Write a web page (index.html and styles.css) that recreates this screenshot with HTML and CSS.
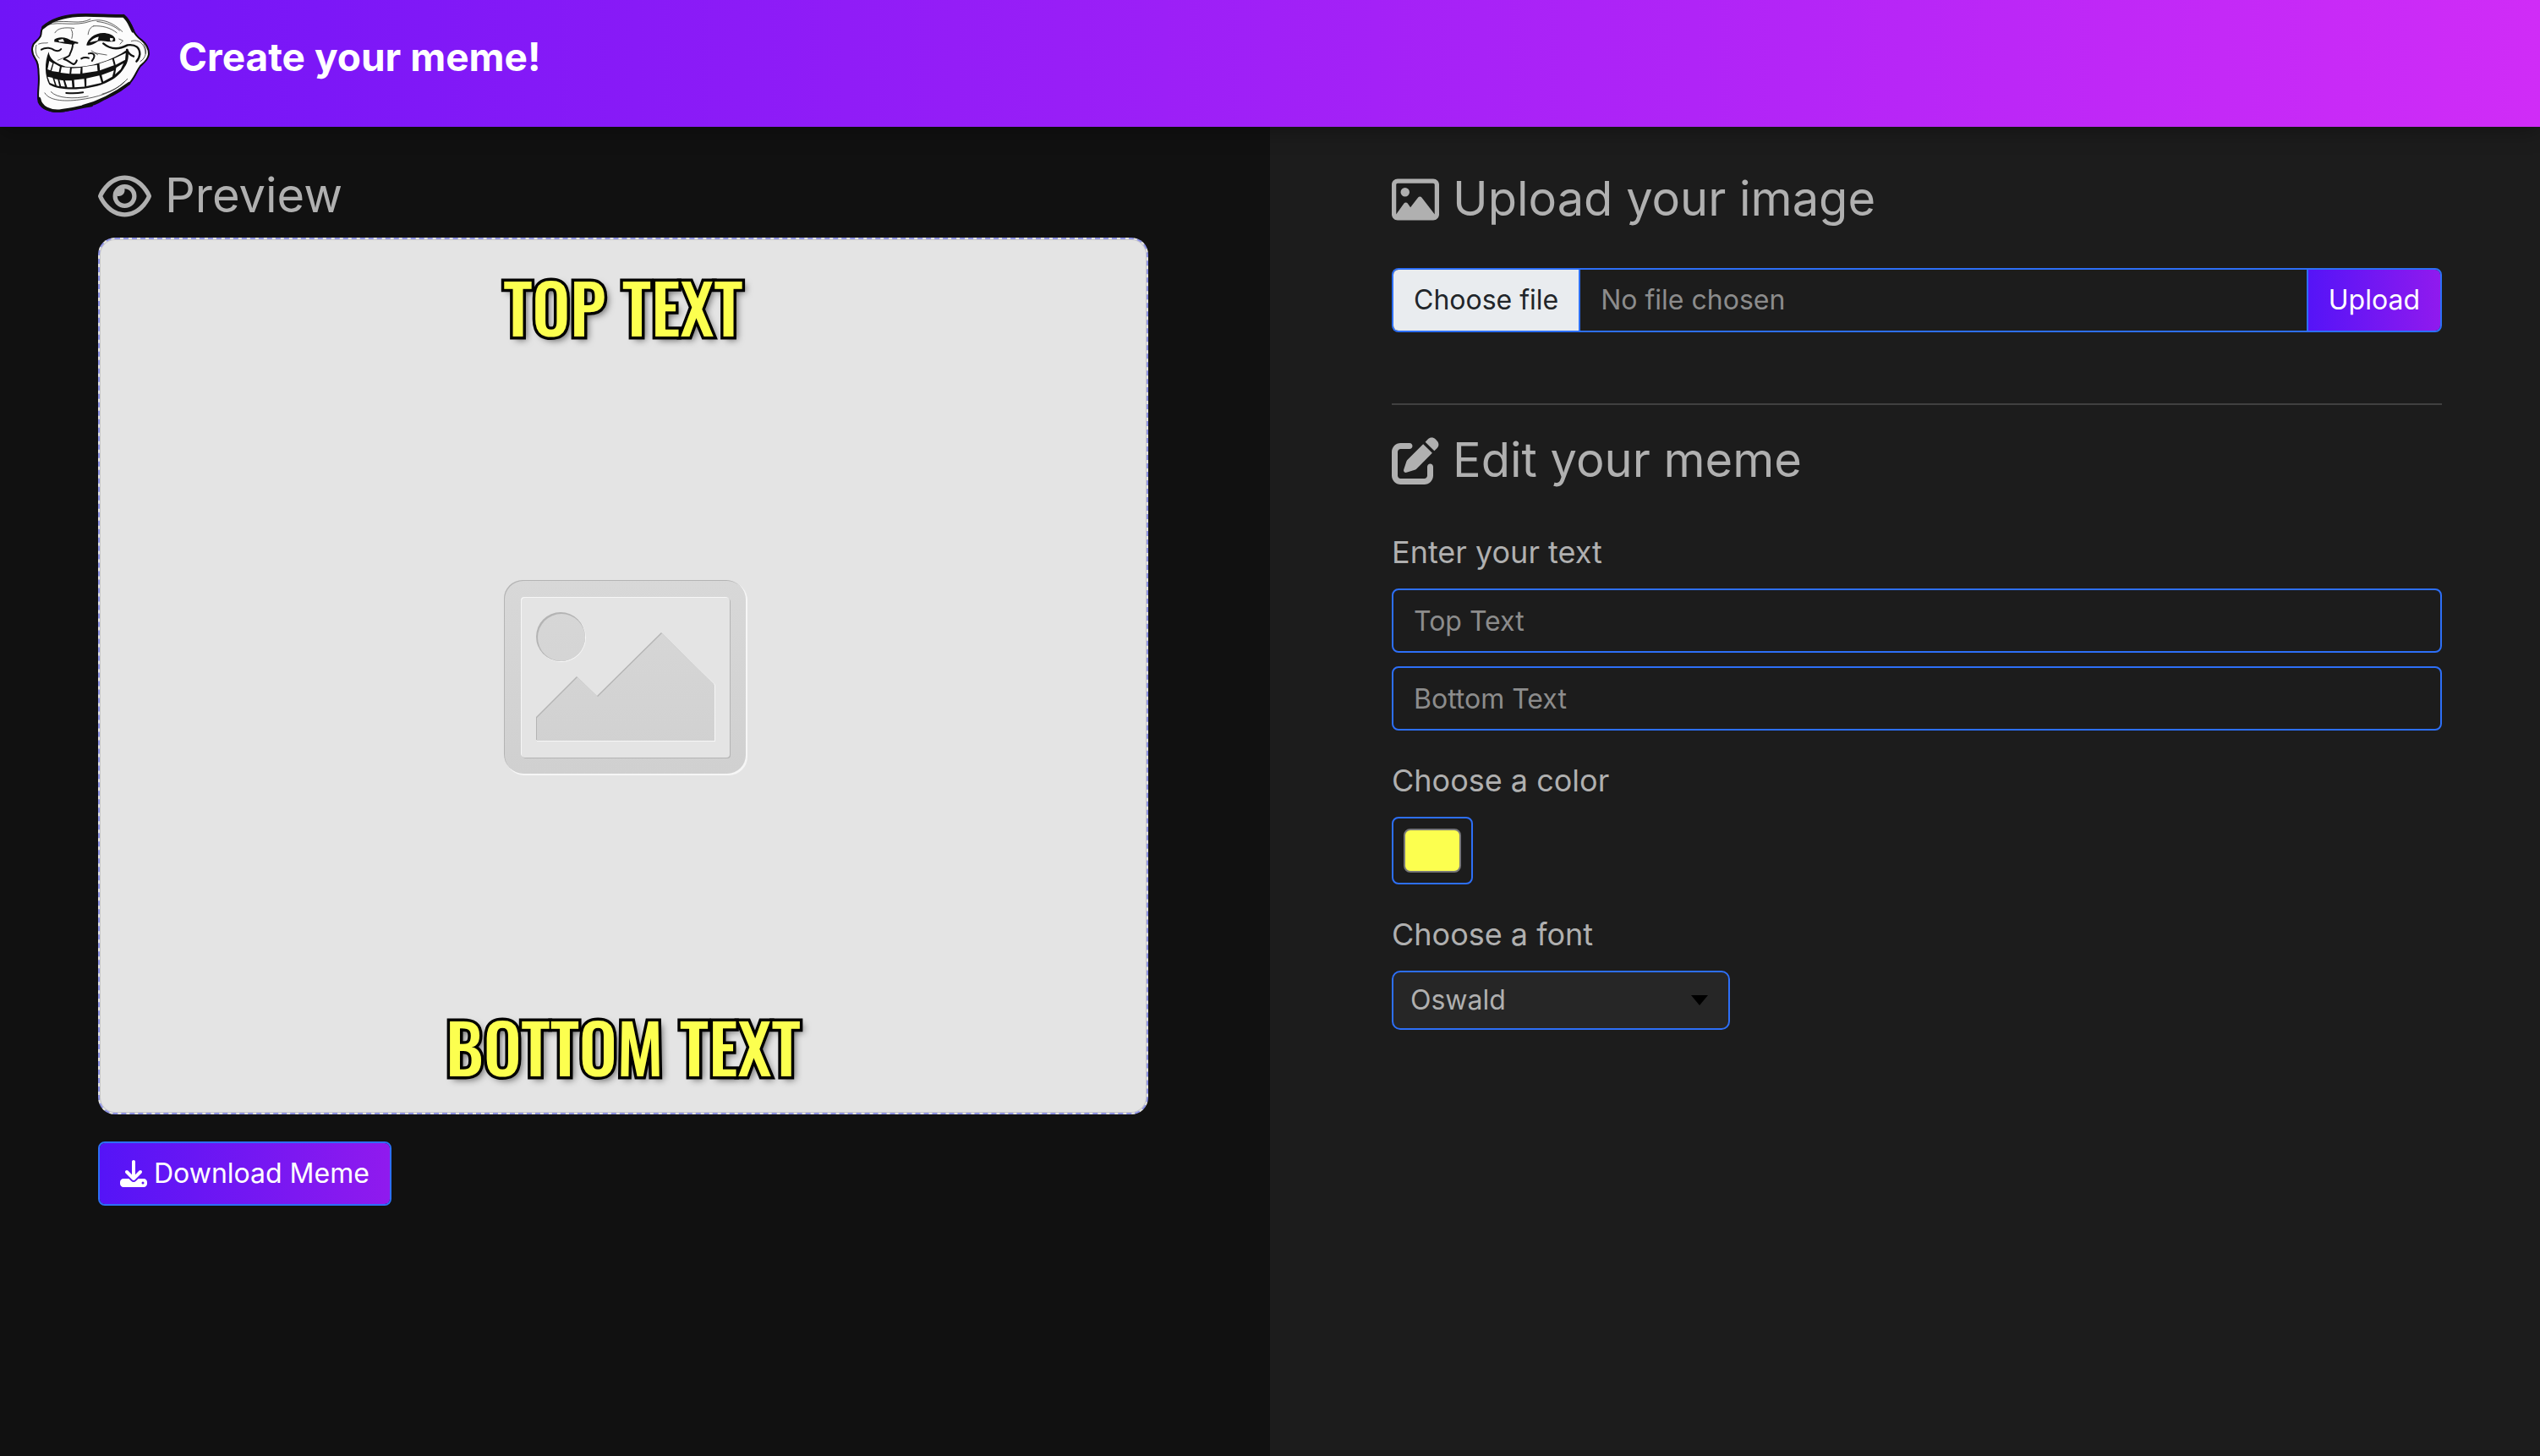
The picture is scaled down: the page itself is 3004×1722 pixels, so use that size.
FILE: index.html
```html
<!DOCTYPE html>
<html lang="en">
<head>
<meta charset="utf-8">
<meta name="viewport" content="width=device-width, initial-scale=1">
<title>Create your meme!</title>
<link rel="stylesheet" href="styles.css">
</head>
<body>
<header class="header">
  <svg class="logo" viewBox="45 45 430 360" role="img" aria-label="Troll face">
    <path class="face" d="M88 100 C112 74 150 58 200 54 C250 49 310 56 374 55 C392 66 402 84 411 106 C416 122 424 130 440 142 C458 156 466 174 466 192 C464 212 448 224 436 234 C424 250 418 270 402 290 C380 316 340 338 306 352 C290 362 274 374 250 374 C220 382 180 394 150 396 C118 400 84 386 74 362 C68 330 78 300 74 262 C74 240 72 222 62 208 C50 190 48 172 56 156 C66 144 78 138 82 124 C84 114 82 106 88 100 Z"/>
    <path class="ink heavy" d="M90 97 C120 70 160 57 214 54 C270 51 330 58 376 56 M376 56 C396 72 400 92 410 110 M76 350 C82 384 116 396 148 394 C190 390 230 378 262 374 M232 378 C290 362 350 330 396 296"/>
    <path class="ink fine" d="M106 88 C150 74 200 96 262 74 C310 62 350 90 372 112 M128 78 C180 70 220 88 258 68 M282 76 C320 80 346 94 362 108 M132 116 C142 98 168 96 200 100 M190 104 C196 114 196 122 192 136 M250 122 C252 106 258 96 270 92 M270 92 C300 90 330 98 352 116 M360 138 L374 144 L364 156 M404 146 C430 136 454 158 454 190 M448 156 C462 180 456 206 436 218 M66 160 C60 180 66 200 76 206 M74 156 C90 150 100 154 106 152 M142 214 L166 204 M274 188 L316 195 M262 180 L284 194 M96 330 C110 356 160 362 220 354 C280 346 340 330 380 290 M118 326 C140 350 200 352 250 342 M300 334 C340 322 366 306 390 280"/>
    <path class="ink" d="M172 330 C190 332 210 332 232 328 M84 176 C100 166 120 170 130 178 C140 182 150 180 154 174 M190 146 C202 150 206 152 212 152 M194 150 C200 172 186 184 184 196 C176 204 166 204 164 210 C178 212 184 222 198 228 C206 226 208 220 210 214 M226 208 C236 202 248 204 252 206 M252 190 C268 186 276 194 270 206 L264 216"/>
    <path class="ink mid" d="M304 154 C330 176 360 176 390 160 C420 156 434 170 434 192 C432 206 428 212 422 218 M388 176 C394 190 400 196 412 200"/>
    <path class="solid" d="M130 140 C144 128 176 130 196 148 C204 152 206 156 198 158 C170 156 150 150 130 148 Z M244 160 C250 134 280 112 316 118 C340 122 350 134 346 146 C320 152 300 140 286 146 C270 156 258 164 244 160 Z"/>
    <path class="tooth" d="M144 142 L160 138 L166 148 L148 148 Z M256 150 C262 140 276 132 288 130 L284 144 Z M328 134 L340 136 L336 146 L328 144 Z"/>
    <path class="solid" d="M110 184 C112 206 130 224 170 236 C230 244 320 226 392 174 C396 200 392 222 380 238 C360 276 310 304 250 312 C200 320 140 318 112 300 C96 270 94 222 110 184 Z"/>
    <path class="tooth" d="M112 216 L124 224 L116 250 L106 246 Z M128 224 L150 236 L146 256 L120 252 Z M156 238 L186 240 L184 262 L152 258 Z M192 242 L224 240 L222 262 L190 262 Z M230 238 L282 230 L284 252 L230 260 Z M290 226 L336 210 L342 232 L292 250 Z M342 208 L384 188 L382 212 L348 230 Z M106 272 L124 276 L132 302 L114 294 Z M130 280 L142 282 L148 306 L138 304 Z M148 284 L162 286 L168 308 L154 306 Z M168 286 L192 286 L194 310 L176 310 Z M200 284 L236 280 L238 308 L202 310 Z M244 278 L290 268 L298 294 L244 306 Z M298 266 L342 250 L336 272 L304 290 Z M350 240 L376 224 L366 246 L346 264 Z"/>
    <path class="ink fine" d="M88 100 C82 110 84 120 82 128 C76 140 62 146 56 158 C48 176 52 196 64 210 C74 222 74 240 74 262 C78 300 68 330 74 356 M410 108 C416 128 436 138 446 146 C468 164 470 196 458 212 C444 228 432 236 426 250 C418 274 404 290 392 300"/>
  </svg>
  <h1 class="title">Create your meme!</h1>
</header>
<main class="columns">
  <section class="pane preview">
    <h2 class="heading">
      <svg class="icon wide" viewBox="0 0 576 512" aria-hidden="true"><path d="M288 80c-65.2 0-118.8 29.6-159.9 67.7C89.6 183.5 63 226 49.4 256c13.6 30 40.2 72.5 78.6 108.3C169.2 402.4 222.8 432 288 432s118.8-29.6 159.9-67.7C486.4 328.5 513 286 526.6 256c-13.6-30-40.2-72.5-78.6-108.3C406.8 109.6 353.2 80 288 80zM95.4 112.6C142.5 68.8 207.2 32 288 32s145.5 36.8 192.6 80.6c46.8 43.5 78.1 95.4 93 131.1c3.3 7.9 3.3 16.7 0 24.6c-14.9 35.7-46.2 87.7-93 131.1C433.5 443.2 368.8 480 288 480s-145.5-36.8-192.6-80.6C48.6 356 17.3 304 2.5 268.3c-3.3-7.9-3.3-16.7 0-24.6C17.3 208 48.6 156 95.4 112.6zM288 336c44.2 0 80-35.8 80-80s-35.8-80-80-80c-.7 0-1.3 0-2 0c1.3 5.1 2 10.5 2 16c0 35.3-28.7 64-64 64c-5.5 0-10.9-.7-16-2c0 .7 0 1.3 0 2c0 44.2 35.8 80 80 80zm0-208a128 128 0 1 1 0 256 128 128 0 1 1 0-256z"/></svg>
      Preview
    </h2>
    <div class="meme">
      <svg class="placeholder" viewBox="2 3 1238 1033" aria-hidden="true">
        <defs>
          <linearGradient id="shade" gradientUnits="userSpaceOnUse" x1="0" y1="407" x2="0" y2="635">
            <stop offset="0" stop-color="#d8d8d8"/><stop offset="1" stop-color="#d0d0d0"/>
          </linearGradient>
        </defs>
        <rect class="light" x="482" y="408" width="286" height="229" rx="22"/>
        <rect class="dark" x="480" y="406" width="285" height="228" rx="22"/>
        <rect x="481" y="407" width="285" height="228" rx="22" fill="url(#shade)"/>
        <rect class="dark" x="502" y="428" width="246" height="189" rx="4"/>
        <rect class="light" x="500" y="426" width="246" height="189" rx="4"/>
        <rect class="paper" x="501" y="427" width="246" height="189" rx="4"/>
        <g class="light" transform="translate(1 1)">
          <circle cx="547" cy="473" r="29"/>
          <path d="M518 568L566 520L590 543L666 468L729 529V596H518Z"/>
        </g>
        <g class="dark">
          <circle cx="547" cy="473" r="29"/>
          <path d="M518 568L566 520L590 543L666 468L728 529V595H518Z"/>
        </g>
        <g fill="url(#shade)" transform="translate(1 1)">
          <circle cx="547" cy="473" r="28"/>
          <path d="M518 568L566 520L590 543L666 468L728 529V595H518Z"/>
        </g>
      </svg>
      <p class="caption top">TOP TEXT</p>
      <p class="caption bottom">BOTTOM TEXT</p>
    </div>
    <button class="button download" type="button">
      <svg class="icon small" viewBox="0 0 512 512" aria-hidden="true"><path d="M288 32c0-17.7-14.3-32-32-32s-32 14.3-32 32V274.7l-73.4-73.4c-12.5-12.5-32.8-12.5-45.3 0s-12.5 32.8 0 45.3l128 128c12.5 12.5 32.8 12.5 45.3 0l128-128c12.5-12.5 12.5-32.8 0-45.3s-32.8-12.5-45.3 0L288 274.7V32zM64 352c-35.3 0-64 28.7-64 64v32c0 35.3 28.7 64 64 64H448c35.3 0 64-28.7 64-64V416c0-35.3-28.7-64-64-64H346.5l-45.3 45.3c-25 25-65.5 25-90.5 0L165.5 352H64zm368 56a24 24 0 1 1 0 48 24 24 0 1 1 0-48z"/></svg>
      Download Meme
    </button>
  </section>
  <section class="pane editor">
    <h2 class="heading">
      <svg class="icon" viewBox="0 0 512 512" aria-hidden="true"><path d="M448 80c8.8 0 16 7.2 16 16V415.8l-5-6.5-136-176c-4.5-5.9-11.6-9.3-19-9.3s-14.4 3.4-19 9.3L202 340.7l-30.5-42.7C167 291.7 159.8 288 152 288s-15 3.7-19.5 10.1l-80 112L48 416.3l0-.3V96c0-8.8 7.2-16 16-16H448zM64 32C28.7 32 0 60.7 0 96V416c0 35.3 28.7 64 64 64H448c35.3 0 64-28.7 64-64V96c0-35.3-28.7-64-64-64H64zm80 192a48 48 0 1 0 0-96 48 48 0 1 0 0 96z"/></svg>
      Upload your image
    </h2>
    <form class="upload">
      <label class="file">
        <input class="file-input" type="file" accept="image/*">
        <span class="file-choose">Choose file</span>
        <span class="file-name">No file chosen</span>
      </label>
      <button class="button" type="button">Upload</button>
    </form>
    <hr class="rule">
    <h2 class="heading">
      <svg class="icon" viewBox="0 0 512 512" aria-hidden="true"><path d="M471.6 21.7c-21.9-21.9-57.3-21.9-79.2 0L362.3 51.7l97.9 97.9 30.1-30.1c21.9-21.9 21.9-57.3 0-79.2L471.6 21.7zm-299.2 220c-6.1 6.1-10.8 13.6-13.5 21.9l-29.6 88.8c-2.9 8.6-.6 18.1 5.8 24.6s15.9 8.7 24.6 5.8l88.8-29.6c8.2-2.7 15.7-7.4 21.9-13.5L437.7 172.3 339.7 74.3 172.4 241.7zM96 64C43 64 0 107 0 160V416c0 53 43 96 96 96H352c53 0 96-43 96-96V320c0-17.7-14.3-32-32-32s-32 14.3-32 32v96c0 17.7-14.3 32-32 32H96c-17.7 0-32-14.3-32-32V160c0-17.7 14.3-32 32-32h96c17.7 0 32-14.3 32-32s-14.3-32-32-32H96z"/></svg>
      Edit your meme
    </h2>
    <form class="fields">
      <div class="field">
        <label class="label" for="top-text">Enter your text</label>
        <input class="text" id="top-text" type="text" placeholder="Top Text">
        <input class="text" type="text" placeholder="Bottom Text" aria-label="Bottom text">
      </div>
      <div class="field">
        <label class="label" for="color">Choose a color</label>
        <input class="color" id="color" type="color" value="#fcff4f">
      </div>
      <div class="field">
        <label class="label" for="font">Choose a font</label>
        <div class="select-wrap">
          <select class="select" id="font"><option>Oswald</option></select>
          <svg class="arrow" viewBox="0 0 20 12" aria-hidden="true"><path d="M0 0H20L10 12Z"/></svg>
        </div>
      </div>
    </form>
  </section>
</main>
</body>
</html>
```
FILE: styles.css
```css
* { box-sizing: border-box; }

body {
  display: flex;
  flex-direction: column;
  min-height: 100vh;
  margin: 0;
  background: #111;
  color: #b0b0b0;
  font: 32px/48px Inter, "Liberation Sans", sans-serif;
}

button, input, select { font: inherit; }

.header {
  position: relative;
  display: flex;
  align-items: center;
  gap: 32px;
  height: 150px;
  padding: 0 36px;
  background: linear-gradient(90deg, #7014f7, #d02cf7);
  box-shadow: 0 4px 24px rgba(0, 0, 0, .35);
}

.logo { width: 143px; height: 120px; }
.face { fill: #fcfcfc; stroke: #111; stroke-width: 6; }
.ink { fill: none; stroke: #111; stroke-width: 6; stroke-linecap: round; stroke-linejoin: round; }
.fine { stroke-width: 2; }
.mid { stroke-width: 7; }
.heavy { stroke-width: 11; }
.solid { fill: #111; }
.tooth { fill: #fcfcfc; }

.title {
  margin: 0 0 16px;
  color: #fff;
  font-size: 46px;
  line-height: 58px;
  font-weight: 700;
}

.columns {
  display: grid;
  grid-template-columns: 1fr 1fr;
  flex: 1;
}

.preview { padding: 48px 144px 48px 116px; }
.editor { padding: 52px 116px 48px 144px; background: #1c1c1c; }

.heading {
  display: flex;
  align-items: center;
  gap: 16px;
  margin: 0 0 16px;
  font-size: 56px;
  line-height: 67px;
  font-weight: 400;
}
.editor .heading { margin-bottom: 48px; }

.icon { width: 56px; height: 56px; fill: currentColor; }
.wide { width: 63px; }
.small { width: 32px; height: 32px; }

.meme {
  display: grid;
  grid-template-rows: 1fr auto;
  justify-items: center;
  aspect-ratio: 600 / 501;
  border: 2px dashed #8f94e4;
  border-radius: 20px;
  background: #e4e4e4;
  box-shadow: inset 0 0 0 1px #c8c8c8;
  overflow: hidden;
}
.placeholder { grid-area: 1 / 1 / 3 / 2; width: 100%; }
.light { fill: #f6f6f6; }
.dark { fill: #b4b4b4; }
.paper { fill: #e4e4e4; }
.caption {
  grid-column: 1;
  margin: 20px 0;
  color: #fcff4f;
  font: 500 80px/118px Oswald, "Liberation Sans Narrow", "Liberation Sans", sans-serif;
  -webkit-text-stroke: 7px #000;
  paint-order: stroke fill;
  text-shadow: 4px 4px 8px rgba(0, 0, 0, .6);
}
.top { grid-row: 1; }
.bottom { grid-row: 2; }

.button {
  padding: 12px 24px;
  border: 2px solid #2d6ff7;
  border-radius: 8px;
  background: linear-gradient(90deg, #5514f7, #901aee) padding-box;
  color: #fff;
}
.download {
  display: flex;
  align-items: center;
  gap: 8px;
  margin-top: 32px;
}

.upload { display: flex; }
.upload .button { border-radius: 0 8px 8px 0; }

.file, .text {
  border: 2px solid #2d6ff7;
  border-radius: 8px;
  background: #1c1c1c;
  color: #8c8c8c;
}
.file {
  position: relative;
  display: flex;
  flex: 1;
  border-right: 0;
  border-radius: 8px 0 0 8px;
  overflow: hidden;
}
.file-input {
  position: absolute;
  inset: 0;
  opacity: 0;
}
.file-choose, .file-name { padding: 12px 24px; }
.file-choose {
  border-right: 2px solid #2d6ff7;
  background: #e9ecef;
  color: #212529;
}

.rule {
  height: 2px;
  margin: 84px 0 32px;
  border: 0;
  background: #404040;
}

.fields { display: grid; gap: 32px; }
.field { display: grid; gap: 16px; justify-items: start; }
.label { font-size: 36px; line-height: 54px; }

.text { width: 100%; height: 76px; padding: 12px 24px; }
.text::placeholder { color: #8c8c8c; opacity: 1; }

.color {
  width: 96px;
  height: 80px;
  padding: 12px;
  border: 2px solid #2d6ff7;
  border-radius: 8px;
  background: none;
}
.color::-webkit-color-swatch-wrapper { padding: 0; }
.color::-webkit-color-swatch { border: 2px solid #777; border-radius: 8px; }

.select-wrap { display: grid; align-items: center; width: 400px; }
.select {
  grid-area: 1 / 1;
  height: 70px;
  padding: 0 20px;
  border: 2px solid #2d6ff7;
  border-radius: 10px;
  background: #262626;
  color: #b0b0b0;
  appearance: none;
}
.arrow {
  grid-area: 1 / 1;
  justify-self: end;
  width: 20px;
  height: 12px;
  margin-right: 26px;
  pointer-events: none;
}
```
